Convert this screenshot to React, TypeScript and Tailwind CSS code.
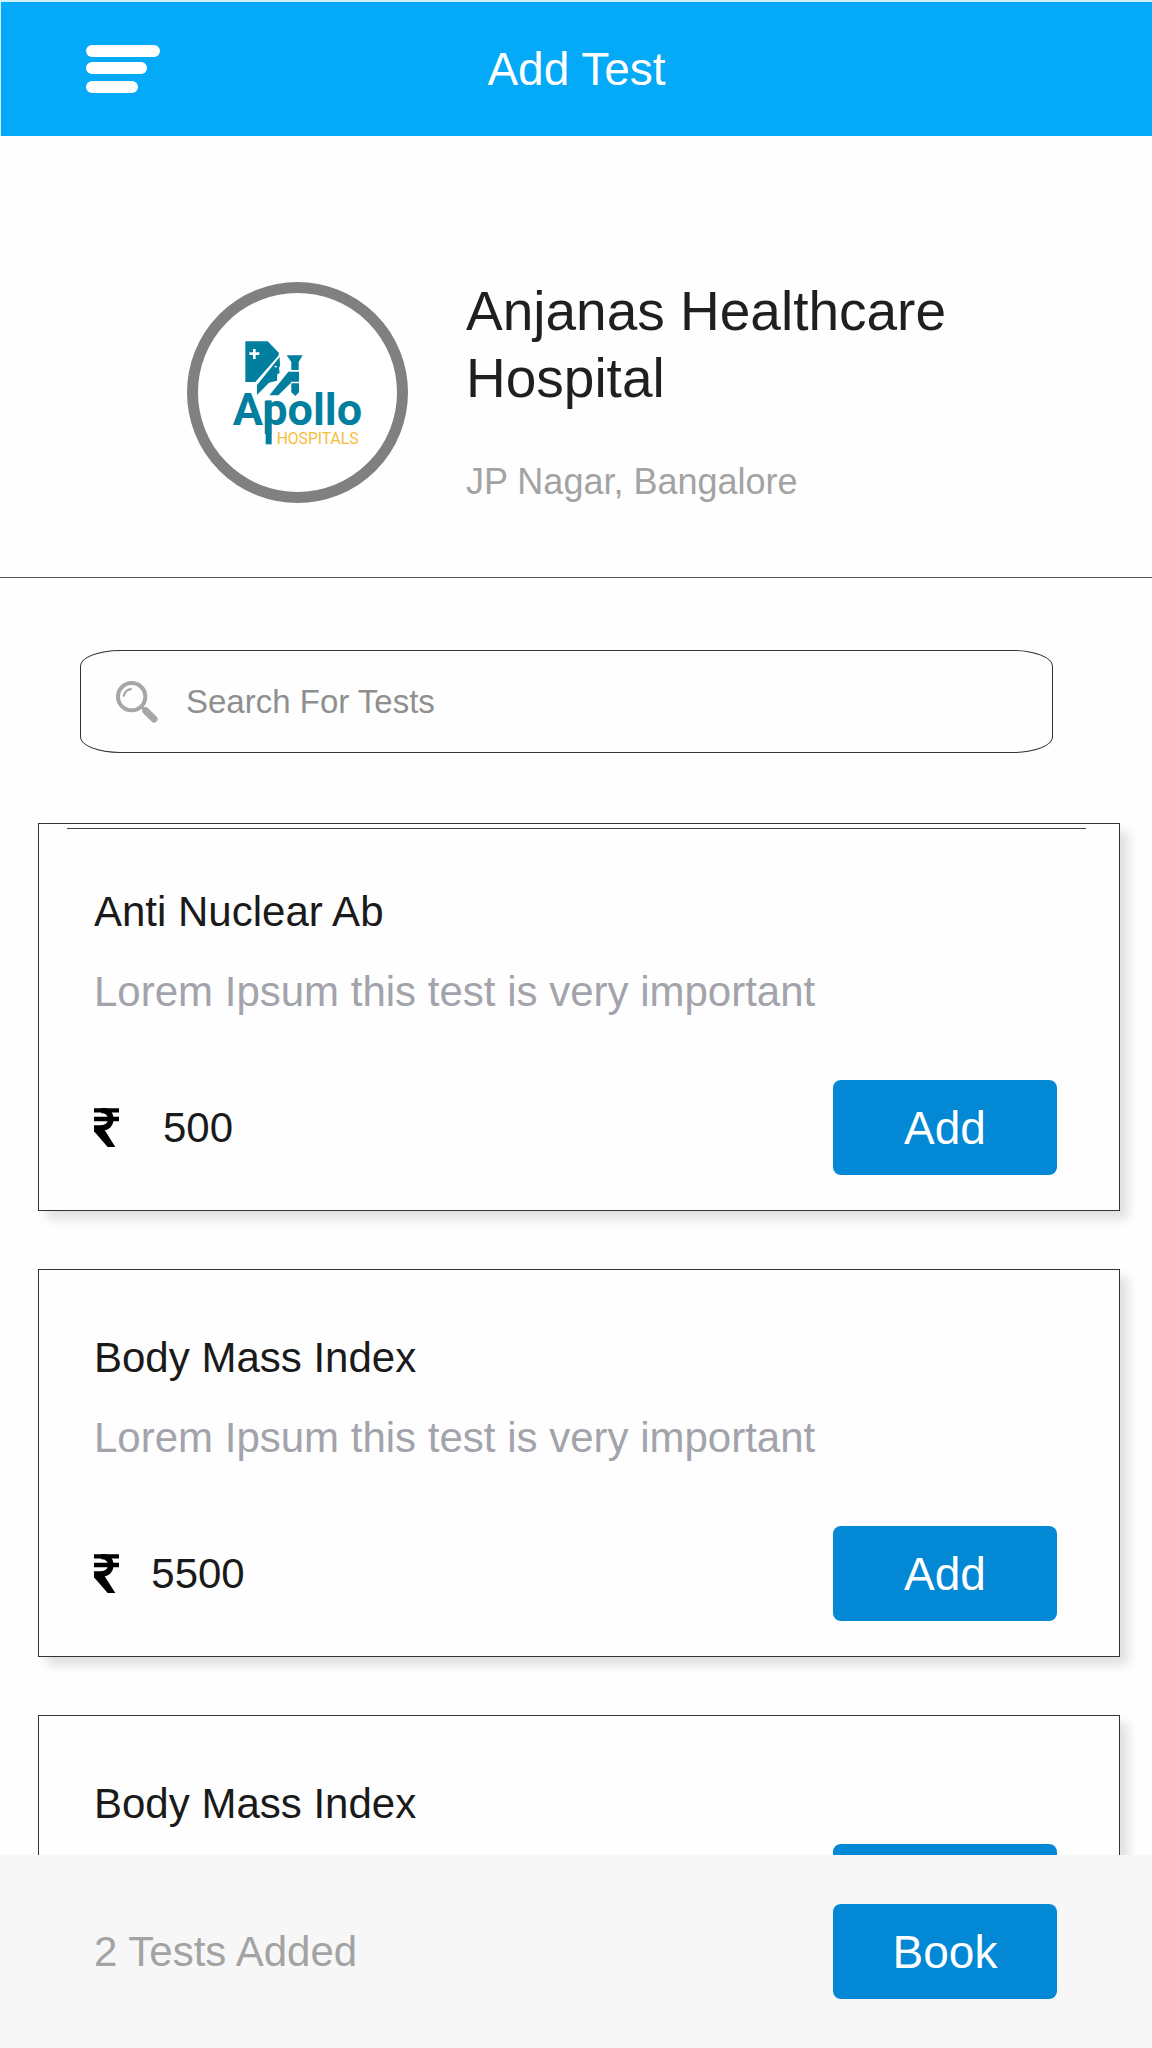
import { useState } from 'react'

type Test = {
  id: number
  name: string
  description?: string
  price: number
}

const tests: Test[] = [
  { id: 1, name: 'Anti Nuclear Ab', description: 'Lorem Ipsum this test is very important', price: 500 },
  { id: 2, name: 'Body Mass Index', description: 'Lorem Ipsum this test is very important', price: 5500 },
  { id: 3, name: 'Body Mass Index', price: 5500 },
]

function MenuIcon() {
  return (
    <svg className="h-[49px] w-[74px]" viewBox="0 0 74 49" fill="#fff" aria-hidden="true">
      <rect width="74" height="12" rx="6" />
      <rect y="17" width="61" height="12" rx="6" />
      <rect y="36" width="52" height="12" rx="6" />
    </svg>
  )
}

function SearchIcon() {
  return (
    <svg className="size-[42px] shrink-0" viewBox="168 150 126 126" fill="none" stroke="#a6a6a6" aria-hidden="true">
      <circle cx="215" cy="197" r="41" strokeWidth="12" />
      <path d="M191 197a24 24 0 0 1 24-23" strokeWidth="7" />
      <path d="M244 226l12 12" strokeWidth="9" />
      <path d="M257 239l25 25" strokeWidth="21" strokeLinecap="round" />
    </svg>
  )
}

function RupeeIcon() {
  return (
    <svg className="h-[39px] w-[25px] shrink-0" viewBox="0 0 75 117" fill="none" stroke="#000" role="img" aria-label="Rupees">
      <path d="M0 7h75M0 33h75" strokeWidth="13" />
      <path d="M0 60h20c21 0 30-11 30-27S40 7 22 7" strokeWidth="17" />
      <path d="M0 54h24l40 63H41L0 70z" fill="#000" stroke="none" />
    </svg>
  )
}

function HospitalLogo() {
  return (
    <svg className="size-[221px] shrink-0" viewBox="20 35 663 663" role="img" aria-label="Apollo Hospitals">
      <circle cx="351.5" cy="366.5" r="315" fill="#fff" stroke="#808080" strokeWidth="33" />
      <g fill="#027f9f">
        <path d="M195 213h67l34 35-2 8-69 79h-30z" />
        <path d="M298 260l1 26-3 7 2 15-7 4-1 19-16 4-8 2-36 37v-30z" />
        <path d="M319 255h48l-12 20v24h-22v-24z" />
        <path d="M324 304h32v30h-24v3l-38 38h-27l38-47z" />
        <path d="M333 339h23v27l-11 11-12-11z" />
        <rect x="256" y="390" width="18" height="132" />
        <text x="157" y="463" fontSize="135" fontWeight="700" fontFamily="Roboto, 'Liberation Sans', sans-serif">
          Apollo
        </text>
      </g>
      <path d="M218 236h8v10h11v8h-11v12h-8v-12h-11v-8h11zM281 287h10l-4 5z" fill="#fff" />
      <text x="289" y="521" fontSize="47" fill="#f5bd38" fontFamily="Roboto, 'Liberation Sans', sans-serif">
        HOSPITALS
      </text>
    </svg>
  )
}

function ActionButton({ children, onClick }: { children: string; onClick?: () => void }) {
  return (
    <button
      type="button"
      onClick={onClick}
      className="h-[95px] w-[224px] shrink-0 rounded-lg bg-[#0288d4] text-[46px] leading-none text-white"
    >
      {children}
    </button>
  )
}

function TestCard({ test, ruled, onAdd }: { test: Test; ruled: boolean; onAdd: () => void }) {
  return (
    <li className="relative shrink-0 border border-[#333] bg-[#fefefe] pt-16 pr-[62px] pb-[35px] pl-[55px] shadow-[8px_8px_10px_rgba(0,0,0,0.12)]">
      {ruled && <hr className="absolute top-1 right-[33px] left-7 border-[#444]" />}
      <h2 className="text-[42px] leading-[48px] text-[#1a1a1a]">{test.name}</h2>
      {test.description && (
        <p className="mt-8 text-[42px] leading-[48px] text-[#a3a3ab]">{test.description}</p>
      )}
      <div className={test.description ? 'mt-16 flex items-center justify-between' : 'mt-4 flex items-center justify-between'}>
        <div className="flex items-center gap-8">
          <RupeeIcon />
          <span className="min-w-[94px] text-center text-[42px] leading-[48px] text-[#1a1a1a]">{test.price}</span>
        </div>
        <ActionButton onClick={onAdd}>Add</ActionButton>
      </div>
    </li>
  )
}

export default function App() {
  const [query, setQuery] = useState('')
  const [added, setAdded] = useState(2)

  const visible = tests.filter((t) => t.name.toLowerCase().includes(query.toLowerCase()))

  return (
    <div className="flex h-screen flex-col bg-[#fefefe] font-['Liberation_Sans',Arial,sans-serif]">
      <header className="grid shrink-0 grid-cols-[1fr_auto_1fr] items-center border-t-2 border-l border-[#d5f0fd] bg-[#04a9f7] px-[85px] py-[41px]">
        <button type="button" aria-label="Menu" className="justify-self-start">
          <MenuIcon />
        </button>
        <h1 className="text-[46px] leading-[52px] text-white">Add Test</h1>
      </header>

      <main className="flex min-h-0 flex-1 flex-col overflow-hidden">
        <section className="flex shrink-0 items-center gap-[58px] border-b border-[#555] pt-[142px] pr-12 pb-[71px] pl-[187px]">
          <HospitalLogo />
          <div className="max-w-[520px]">
            <h2 className="text-[55px] leading-[67px] text-[#1f1f1f]">Anjanas Healthcare Hospital</h2>
            <p className="mt-[46px] text-[36px] leading-[48px] text-[#a3a3a3]">JP Nagar, Bangalore</p>
          </div>
        </section>

        <label className="mt-[72px] mr-[99px] ml-20 flex h-[103px] shrink-0 items-center gap-7 rounded-[40px/16px] border border-[#333] px-[35px]">
          <SearchIcon />
          <input
            type="text"
            aria-label="Search For Tests"
            placeholder="Search For Tests"
            value={query}
            onChange={(e) => setQuery(e.target.value)}
            className="min-w-0 flex-1 bg-transparent text-[33px] leading-[48px] text-[#1a1a1a] outline-none placeholder:text-[#8f8f8f]"
          />
        </label>

        <ul className="mt-[70px] flex flex-col gap-[58px] pr-8 pl-[38px]">
          {visible.map((t, i) => (
            <TestCard key={t.id} test={t} ruled={i === 0} onAdd={() => setAdded(added + 1)} />
          ))}
        </ul>
      </main>

      <footer className="z-10 flex shrink-0 items-center justify-between bg-[#f7f7f7] py-[49px] pr-[95px] pl-[94px]">
        <p className="text-[42px] leading-[48px] text-[#a3a3a3]">{added} Tests Added</p>
        <ActionButton>Book</ActionButton>
      </footer>
    </div>
  )
}
